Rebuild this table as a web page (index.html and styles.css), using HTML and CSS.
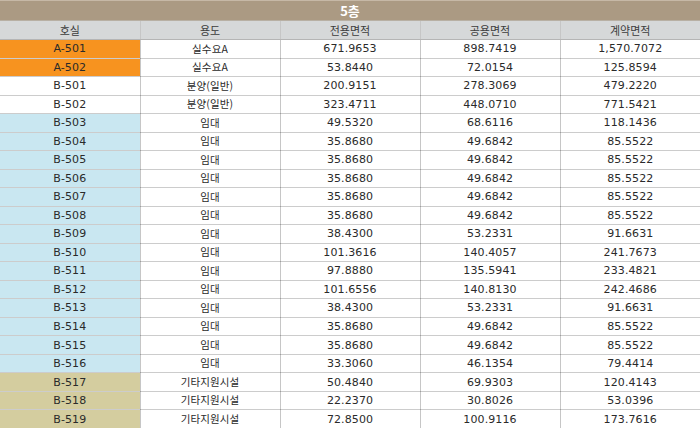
FILE: index.html
```html
<!DOCTYPE html>
<html lang="ko">
<head>
<meta charset="utf-8">
<title>5층</title>
<link rel="stylesheet" href="styles.css">
</head>
<body>
<table class="floor">
  <thead>
    <tr class="title-row"><th colspan="5" class="title">5층</th></tr>
    <tr class="head-row">
      <th>호실</th><th>용도</th><th>전용면적</th><th>공용면적</th><th>계약면적</th>
    </tr>
  </thead>
  <tbody>
    <tr><td class="unit orange">A-501</td><td class="use">실수요A</td><td>671.9653</td><td>898.7419</td><td>1,570.7072</td></tr>
    <tr><td class="unit orange">A-502</td><td class="use">실수요A</td><td>53.8440</td><td>72.0154</td><td>125.8594</td></tr>
    <tr><td class="unit">B-501</td><td class="use">분양(일반)</td><td>200.9151</td><td>278.3069</td><td>479.2220</td></tr>
    <tr><td class="unit">B-502</td><td class="use">분양(일반)</td><td>323.4711</td><td>448.0710</td><td>771.5421</td></tr>
    <tr><td class="unit blue">B-503</td><td class="use">임대</td><td>49.5320</td><td>68.6116</td><td>118.1436</td></tr>
    <tr><td class="unit blue">B-504</td><td class="use">임대</td><td>35.8680</td><td>49.6842</td><td>85.5522</td></tr>
    <tr><td class="unit blue">B-505</td><td class="use">임대</td><td>35.8680</td><td>49.6842</td><td>85.5522</td></tr>
    <tr><td class="unit blue">B-506</td><td class="use">임대</td><td>35.8680</td><td>49.6842</td><td>85.5522</td></tr>
    <tr><td class="unit blue">B-507</td><td class="use">임대</td><td>35.8680</td><td>49.6842</td><td>85.5522</td></tr>
    <tr><td class="unit blue">B-508</td><td class="use">임대</td><td>35.8680</td><td>49.6842</td><td>85.5522</td></tr>
    <tr><td class="unit blue">B-509</td><td class="use">임대</td><td>38.4300</td><td>53.2331</td><td>91.6631</td></tr>
    <tr><td class="unit blue">B-510</td><td class="use">임대</td><td>101.3616</td><td>140.4057</td><td>241.7673</td></tr>
    <tr><td class="unit blue">B-511</td><td class="use">임대</td><td>97.8880</td><td>135.5941</td><td>233.4821</td></tr>
    <tr><td class="unit blue">B-512</td><td class="use">임대</td><td>101.6556</td><td>140.8130</td><td>242.4686</td></tr>
    <tr><td class="unit blue">B-513</td><td class="use">임대</td><td>38.4300</td><td>53.2331</td><td>91.6631</td></tr>
    <tr><td class="unit blue">B-514</td><td class="use">임대</td><td>35.8680</td><td>49.6842</td><td>85.5522</td></tr>
    <tr><td class="unit blue">B-515</td><td class="use">임대</td><td>35.8680</td><td>49.6842</td><td>85.5522</td></tr>
    <tr><td class="unit blue">B-516</td><td class="use">임대</td><td>33.3060</td><td>46.1354</td><td>79.4414</td></tr>
    <tr><td class="unit olive">B-517</td><td class="use">기타지원시설</td><td>50.4840</td><td>69.9303</td><td>120.4143</td></tr>
    <tr><td class="unit olive">B-518</td><td class="use">기타지원시설</td><td>22.2370</td><td>30.8026</td><td>53.0396</td></tr>
    <tr><td class="unit olive">B-519</td><td class="use">기타지원시설</td><td>72.8500</td><td>100.9116</td><td>173.7616</td></tr>
  </tbody>
</table>
</body>
</html>
```
FILE: styles.css
```css
html, body {
  margin: 0;
  padding: 0;
  background: #ffffff;
}

.floor {
  width: 700px;
  table-layout: fixed;
  border-collapse: collapse;
  font-family: "DejaVu Sans", "Noto Sans CJK KR", sans-serif;
  font-size: 11px;
  color: #2a2a2a;
}

.floor th,
.floor td {
  padding: 0;
  text-align: center;
  vertical-align: middle;
  white-space: nowrap;
  overflow: hidden;
  border-left: 1px solid #c6c6c6;
  border-right: 1px solid #c6c6c6;
  border-bottom: 1px solid rgba(0, 0, 0, 0.2);
  line-height: 1;
}

.floor th:first-child,
.floor td:first-child {
  border-left: none;
}

.floor th:last-child,
.floor td:last-child {
  border-right: none;
}

.title-row {
  height: 20px;
}

.title {
  background: #ab9a83;
  color: #ffffff;
  font-family: "Noto Sans CJK KR", sans-serif;
  font-weight: bold;
  font-size: 13px;
  border-top: 1px solid #c6b8a6;
  border-bottom: 1px solid #b8b0a4 !important;
}

.head-row {
  height: 19px;
}

.head-row th {
  background: #d6d8d9;
  color: #3c3c3c;
  font-family: "Noto Sans CJK KR", sans-serif;
  font-weight: normal;
  font-size: 11px;
  border-bottom: 1px solid #b5b5b5;
}

.floor tbody tr {
  height: 18.52px;
}

.floor td {
  letter-spacing: 0.1px;
}

.use {
  font-family: "Noto Sans CJK KR", sans-serif;
  font-size: 10.5px;
  letter-spacing: 0;
}

.orange {
  background: #f7931f;
}

.blue {
  background: #c9e7f1;
}

.olive {
  background: #d4cd9f;
}
```
